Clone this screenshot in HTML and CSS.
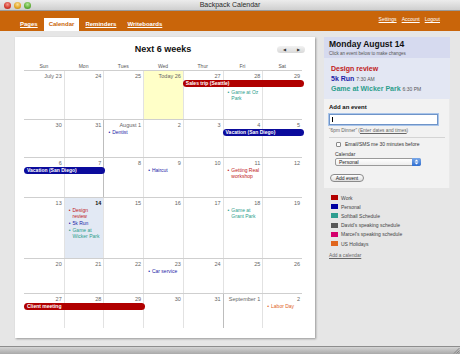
FILE: index.html
```html
<!DOCTYPE html>
<html>
<head>
<meta charset="utf-8">
<title>Backpack Calendar</title>
<link rel="stylesheet" href="styles.css">
</head>
<body>
<div class="window">
  <div class="titlebar">
    <div class="lights"><span class="light l-red"></span><span class="light l-yellow"></span><span class="light l-green"></span></div>
    <div class="wtitle">Backpack Calendar</div>
  </div>
  <div class="nav">
    <div class="tabs">
      <a class="tab">Pages</a>
      <a class="tab active">Calendar</a>
      <a class="tab">Reminders</a>
      <a class="tab">Writeboards</a>
    </div>
    <div class="links"><a>Settings</a><a>Account</a><a>Logout</a></div>
  </div>
  <div class="content">
    <div class="panel">
      <div class="cal-head">
        <span></span>
        <h1>Next 6 weeks</h1>
        <div class="pager"><span class="arr">&#9664;</span><span class="arr">&#9654;</span></div>
      </div>
      <div class="dows"><span>Sun</span><span>Mon</span><span>Tues</span><span>Wed</span><span>Thur</span><span>Fri</span><span>Sat</span></div>

      <div class="week h49">
        <div class="cell"><div class="num">July 23</div></div>
        <div class="cell"><div class="num">24</div></div>
        <div class="cell"><div class="num">25</div></div>
        <div class="cell today"><div class="num">Today 26</div></div>
        <div class="cell"><div class="num">27</div></div>
        <div class="cell covered"><div class="num">28</div><ul class="evs"><li class="teal">Game at Oz Park</li></ul></div>
        <div class="cell"><div class="num">29</div></div>
        <div class="bar b-red cs5 ce8">Sales trip (Seattle)</div>
      </div>

      <div class="week h38">
        <div class="cell"><div class="num">30</div></div>
        <div class="cell"><div class="num">31</div></div>
        <div class="cell month"><div class="num">August 1</div><ul class="evs"><li class="blue">Dentist</li></ul></div>
        <div class="cell"><div class="num">2</div></div>
        <div class="cell"><div class="num">3</div></div>
        <div class="cell"><div class="num">4</div></div>
        <div class="cell"><div class="num">5</div></div>
        <div class="bar b-blue cs6 ce8">Vacation (San Diego)</div>
      </div>

      <div class="week h40">
        <div class="cell"><div class="num">6</div></div>
        <div class="cell"><div class="num">7</div></div>
        <div class="cell month"><div class="num">8</div></div>
        <div class="cell"><div class="num">9</div><ul class="evs"><li class="blue">Haircut</li></ul></div>
        <div class="cell"><div class="num">10</div></div>
        <div class="cell"><div class="num">11</div><ul class="evs"><li class="red">Getting Real workshop</li></ul></div>
        <div class="cell"><div class="num">12</div></div>
        <div class="bar b-blue cs1 ce3">Vacation (San Diego)</div>
      </div>

      <div class="week h61">
        <div class="cell"><div class="num">13</div></div>
        <div class="cell selected"><div class="num">14</div><ul class="evs"><li class="red">Design review</li><li class="blue">5k Run</li><li class="teal">Game at Wicker Park</li></ul></div>
        <div class="cell"><div class="num">15</div></div>
        <div class="cell"><div class="num">16</div></div>
        <div class="cell"><div class="num">17</div></div>
        <div class="cell"><div class="num">18</div><ul class="evs"><li class="teal">Game at Grant Park</li></ul></div>
        <div class="cell"><div class="num">19</div></div>
      </div>

      <div class="week h35">
        <div class="cell"><div class="num">20</div></div>
        <div class="cell"><div class="num">21</div></div>
        <div class="cell"><div class="num">22</div></div>
        <div class="cell"><div class="num">23</div><ul class="evs"><li class="blue">Car service</li></ul></div>
        <div class="cell"><div class="num">24</div></div>
        <div class="cell"><div class="num">25</div></div>
        <div class="cell"><div class="num">26</div></div>
      </div>

      <div class="week h35">
        <div class="cell"><div class="num">27</div></div>
        <div class="cell"><div class="num">28</div></div>
        <div class="cell"><div class="num">29</div></div>
        <div class="cell"><div class="num">30</div></div>
        <div class="cell"><div class="num">31</div></div>
        <div class="cell month"><div class="num">September 1</div></div>
        <div class="cell"><div class="num">2</div><ul class="evs"><li class="orange">Labor Day</li></ul></div>
        <div class="bar b-red cs1 ce4">Client meeting</div>
      </div>
    </div>

    <div class="sidebar">
      <div class="sb-head">
        <h2>Monday August 14</h2>
        <p class="sub">Click an event below to make changes</p>
      </div>
      <div class="sb-events">
        <div class="sev red">Design review</div>
        <div class="sev blue">5k Run <span class="time">7:30 AM</span></div>
        <div class="sev teal">Game at Wicker Park <span class="time">6:30 PM</span></div>
      </div>
      <div class="sb-form">
        <div class="f-label">Add an event</div>
        <div class="f-input"><span class="caret"></span></div>
        <div class="f-hint">“6pm Dinner” (<a>Enter dates and times</a>)</div>
        <div class="f-sep"></div>
        <div class="f-check"><span class="box"></span>Email/SMS me 30 minutes before</div>
        <div class="f-cal">Calendar</div>
        <div class="f-select"><span>Personal</span><span class="stepper"><svg width="5" height="6" viewBox="0 0 5 6"><path d="M2.5 0.5 L4.5 2.5 H0.5 Z M2.5 5.5 L4.5 3.5 H0.5 Z" fill="#fff"/></svg></span></div>
        <div class="f-btn">Add event</div>
      </div>
      <ul class="legend">
        <li><span class="sw s-work"></span>Work</li>
        <li><span class="sw s-personal"></span>Personal</li>
        <li><span class="sw s-softball"></span>Softball Schedule</li>
        <li><span class="sw s-david"></span>David's speaking schedule</li>
        <li><span class="sw s-marcel"></span>Marcel's speaking schedule</li>
        <li><span class="sw s-us"></span>US Holidays</li>
      </ul>
      <a class="addcal">Add a calendar</a>
    </div>
  </div>
  <div class="bottombar">
    <svg class="grip" width="7" height="7" viewBox="0 0 7 7"><path d="M6.5 1 L1 6.5 M6.5 3.5 L3.5 6.5 M6.5 5.5 L5.5 6.5" stroke="#777" stroke-width="0.8"/></svg>
  </div>
</div>
</body>
</html>
```

FILE: styles.css
```css
* { box-sizing: border-box; }
html, body { margin: 0; padding: 0; }
body {
  width: 460px;
  height: 354px;
  overflow: hidden;
  font-family: "Liberation Sans", Arial, sans-serif;
  color: #333;
  background: #e6e6e6;
}
ul { list-style: none; margin: 0; padding: 0; }
p, h1, h2 { margin: 0; }
a { cursor: pointer; }

.window { display: flex; flex-direction: column; height: 354px; }

/* title bar */
.titlebar {
  height: 11px;
  display: grid;
  grid-template-columns: 1fr auto 1fr;
  align-items: center;
  background: linear-gradient(#ececec, #cfcfcf);
  border-bottom: 1px solid #9a9a9a;
}
.lights { display: flex; gap: 3px; padding-left: 4px; }
.light { width: 7px; height: 7px; border-radius: 50%; display: block; }
.l-red { background: radial-gradient(circle at 50% 35%, #f49a90, #d2392c 60%, #a8261c); }
.l-yellow { background: radial-gradient(circle at 50% 35%, #fbe09a, #e1a523 60%, #b07d12); }
.l-green { background: radial-gradient(circle at 50% 35%, #b6e69a, #5fae36 60%, #3e8420); }
.wtitle { font-size: 7px; color: #2a2a2a; line-height: 10px; }

/* nav */
.nav {
  height: 20px;
  background: #c9650a;
  display: flex;
  justify-content: space-between;
  align-items: flex-end;
  padding: 0 20px 0 15px;
}
.tabs { display: flex; align-items: flex-end; gap: 1px; }
.tab {
  height: 13px;
  line-height: 13px;
  padding: 0 5px;
  font-size: 6px;
  font-weight: bold;
  color: #fff;
  text-decoration: underline;
}
.tab.active { background: #fff; color: #c9650a; text-decoration: none; }
.links { display: flex; gap: 5px; height: 16px; line-height: 8px; align-items: flex-start; }
.links a { font-size: 5px; color: #fff; text-decoration: underline; }

/* content */
.content {
  flex: 1;
  display: flex;
  align-items: flex-start;
  padding: 6px 0 0 15px;
  gap: 9px;
}
.panel {
  width: 300px;
  height: 301px;
  background: #fff;
  padding: 0 13px 0 9px;
  box-shadow: 1px 1px 2px rgba(0, 0, 0, 0.35);
}
.cal-head {
  margin-top: 6px;
  height: 12px;
  display: grid;
  grid-template-columns: 1fr auto 1fr;
  align-items: center;
}
.cal-head h1 { font-size: 9px; font-weight: bold; color: #111; line-height: 12px; }
.pager {
  justify-self: end;
  margin-right: -3px;
  width: 28px;
  height: 7px;
  border-radius: 4px;
  background: linear-gradient(#f2f2f2, #d8d8d8);
  display: flex;
  justify-content: space-around;
  align-items: center;
  font-size: 4px;
  color: #333;
}
.dows {
  margin-top: 7px;
  height: 8px;
  display: grid;
  grid-template-columns: repeat(7, minmax(0, 1fr));
  font-size: 5px;
  line-height: 8px;
  text-align: center;
  color: #555;
}

.week {
  display: grid;
  grid-template-columns: repeat(7, minmax(0, 1fr));
  grid-template-rows: 1fr;
  border-top: 1px solid #cfcfcf;
}
.h49 { height: 49px; }
.h38 { height: 38px; }
.h40 { height: 40px; }
.h61 { height: 61px; }
.h35 { height: 35px; }

.cell {
  grid-row: 1;
  border-left: 1px solid #e2e2e2;
  padding: 2px 2px 0 2px;
  min-width: 0;
}
.cell:nth-child(1) { grid-column: 1; border-left: none; }
.cell:nth-child(2) { grid-column: 2; }
.cell:nth-child(3) { grid-column: 3; }
.cell:nth-child(4) { grid-column: 4; }
.cell:nth-child(5) { grid-column: 5; }
.cell:nth-child(6) { grid-column: 6; }
.cell:nth-child(7) { grid-column: 7; }
.cell.month { border-left-color: #bdbdbd; }
.cell.today { background: #ffffc8; }
.cell.selected { background: #e2e9f4; }
.num {
  text-align: right;
  font-size: 5.5px;
  line-height: 7px;
  color: #666;
  white-space: nowrap;
}
.selected .num { font-weight: bold; color: #111; }
.evs { font-size: 5px; line-height: 6px; margin-top: 0; padding-left: 2px; }
.covered .evs { margin-top: 9px; }
.evs li { display: flex; gap: 2px; margin-bottom: 1px; }
.evs li::before { content: "•"; flex: none; }

.red { color: #c01818; }
.blue { color: #1d1da8; }
.teal { color: #2b9e8c; }
.orange { color: #e0621c; }

.bar {
  grid-row: 1;
  align-self: start;
  min-width: 0;
  margin-top: 9px;
  margin-right: -2px;
  height: 7px;
  line-height: 7px;
  border-radius: 3.5px;
  padding-left: 3px;
  font-size: 5px;
  font-weight: bold;
  color: #fff;
  white-space: nowrap;
  overflow: hidden;
}
.b-red { background: #b00000; }
.b-blue { background: #0b0b9c; }
.cs1 { grid-column-start: 1; }
.cs5 { grid-column-start: 5; }
.cs6 { grid-column-start: 6; }
.ce3 { grid-column-end: 3; }
.ce4 { grid-column-end: 4; }
.ce8 { grid-column-end: 8; }

/* sidebar */
.sidebar { width: 126px; display: flex; flex-direction: column; }
.sb-head { height: 21px; background: #d6daef; padding: 3px 5px 0; }
.sb-head h2 { font-size: 8.5px; line-height: 9px; color: #111; }
.sub { font-size: 4.5px; line-height: 6px; margin-top: 2px; color: #555; }
.sb-events { background: #e3e7f3; padding: 6px 5px 5px 7px; }
.sev { font-size: 7px; line-height: 10px; font-weight: bold; }
.time { font-size: 5px; font-weight: normal; color: #555; }
.sb-form { background: #f2f2f2; padding: 5px 5px 6px 5px; border-right: 1px solid #e9e9e9; }
.f-label { font-size: 6px; line-height: 7px; font-weight: bold; color: #111; }
.f-input {
  margin-top: 3px;
  width: 109px;
  height: 11px;
  background: #fff;
  border: 1px solid #6f94c8;
  box-shadow: 0 0 0 1px #a9c5ea;
  padding: 2px 2px;
}
.caret { display: block; width: 1px; height: 5px; background: #000; }
.f-hint { margin-top: 3px; font-size: 4.8px; line-height: 6px; color: #666; }
.f-hint a { text-decoration: underline; }
.f-sep { margin-top: 3px; border-top: 1px solid #d4d4d4; width: 116px; }
.f-check {
  margin-top: 3px;
  padding-left: 7px;
  display: flex;
  align-items: center;
  gap: 4px;
  font-size: 5px;
  line-height: 6px;
  color: #333;
}
.box { width: 5px; height: 5px; border: 1px solid #8a8a8a; border-radius: 1px; background: #fafafa; }
.f-cal { margin-top: 4px; padding-left: 6px; font-size: 5px; line-height: 6px; color: #333; }
.f-select {
  margin: 1px 0 0 6px;
  width: 86px;
  height: 8px;
  border: 1px solid #9a9a9a;
  border-radius: 2px;
  background: linear-gradient(#fff, #eee);
  display: flex;
  justify-content: space-between;
  align-items: center;
  font-size: 5px;
  padding-left: 3px;
  color: #222;
}
.stepper {
  width: 9px;
  height: 8px;
  margin-right: -1px;
  border-radius: 0 2px 2px 0;
  background: linear-gradient(#7aa8e8, #2f6fd2);
  display: flex;
  align-items: center;
  justify-content: center;
}
.f-btn {
  margin: 8px 0 0 1px;
  width: 34px;
  height: 8px;
  border: 1px solid #8a8a8a;
  border-radius: 4px;
  background: linear-gradient(#fff, #dedede);
  font-size: 5px;
  line-height: 6px;
  text-align: center;
  color: #222;
}
.legend { margin-top: 5px; padding-left: 7px; }
.legend li { display: flex; align-items: center; gap: 3px; height: 9.2px; font-size: 5px; color: #444; }
.sw { width: 7px; height: 5px; display: block; }
.s-work { background: #b20000; }
.s-personal { background: #0000a0; }
.s-softball { background: #2e9e90; }
.s-david { background: #585858; }
.s-marcel { background: #d4006c; }
.s-us { background: #e0661e; }
.addcal { margin: 4px 0 0 5px; font-size: 4.8px; line-height: 7px; color: #666; text-decoration: underline; }

.bottombar {
  height: 8px;
  background: linear-gradient(#d4d4d4, #a9a9a9);
  border-top: 1px solid #8d8d8d;
  display: flex;
  justify-content: flex-end;
  align-items: flex-end;
}
.grip { display: block; }
```
